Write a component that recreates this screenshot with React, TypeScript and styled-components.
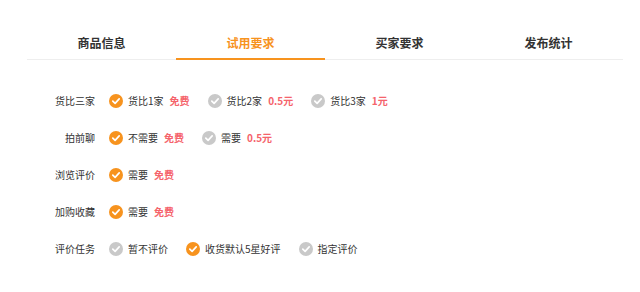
import React from "react";
import styled, { createGlobalStyle } from "styled-components";

const Global = createGlobalStyle`
  html, body { margin: 0; padding: 0; background: #fff; }
  body { font-family: "Noto Sans CJK SC", "Noto Sans", sans-serif; color: #333; }
`;

const Page = styled.div`
  width: 640px;
  height: 292px;
  padding: 27px 17px 0 27px;
  box-sizing: border-box;
`;

const Tabs = styled.div`
  display: grid;
  grid-template-columns: repeat(4, 1fr);
  width: 596px;
  border-bottom: 1px solid #eeeeee;
`;

const Tab = styled.div<{ $active?: boolean }>`
  position: relative;
  height: 32px;
  line-height: 32px;
  text-align: center;
  font-size: 12px;
  font-weight: 700;
  color: ${(p) => (p.$active ? "#f7931e" : "#333")};
  &::after {
    content: "";
    display: ${(p) => (p.$active ? "block" : "none")};
    position: absolute;
    left: 0;
    right: 0;
    bottom: -1px;
    height: 2px;
    background: #f7931e;
  }
`;

const Rows = styled.div`
  display: flex;
  flex-direction: column;
  padding-top: 22px;
`;

const Row = styled.div`
  display: flex;
  align-items: center;
  height: 37px;
`;

const Label = styled.div`
  width: 68px;
  text-align: right;
  font-size: 10px;
  color: #333;
  margin-right: 14px;
`;

const Options = styled.div`
  display: flex;
  align-items: center;
  gap: 18px;
`;

const Option = styled.div`
  display: flex;
  align-items: center;
  font-size: 10px;
  color: #333;
`;

const OptText = styled.span`
  margin-left: 5px;
`;

const Price = styled.span`
  margin-left: 6px;
  color: #f5636b;
  font-weight: 700;
`;

const Check = ({ on }: { on: boolean }) => (
  <svg width="14" height="14" viewBox="0 0 14 14">
    <circle cx="7" cy="7" r="7" fill={on ? "#f7931e" : "#c9c9c9"} />
    <path
      d="M3.8 7.1 L6.1 9.3 L10.2 4.9"
      fill="none"
      stroke="#fff"
      strokeWidth="1.7"
      strokeLinecap="round"
      strokeLinejoin="round"
    />
  </svg>
);

type Opt = { text: string; price?: string; on: boolean };

const data: { label: string; opts: Opt[] }[] = [
  {
    label: "货比三家",
    opts: [
      { text: "货比1家", price: "免费", on: true },
      { text: "货比2家", price: "0.5元", on: false },
      { text: "货比3家", price: "1元", on: false },
    ],
  },
  {
    label: "拍前聊",
    opts: [
      { text: "不需要", price: "免费", on: true },
      { text: "需要", price: "0.5元", on: false },
    ],
  },
  { label: "浏览评价", opts: [{ text: "需要", price: "免费", on: true }] },
  { label: "加购收藏", opts: [{ text: "需要", price: "免费", on: true }] },
  {
    label: "评价任务",
    opts: [
      { text: "暂不评价", on: false },
      { text: "收货默认5星好评", on: true },
      { text: "指定评价", on: false },
    ],
  },
];

export default function App() {
  return (
    <>
      <Global />
      <Page>
        <Tabs>
          <Tab>商品信息</Tab>
          <Tab $active>试用要求</Tab>
          <Tab>买家要求</Tab>
          <Tab>发布统计</Tab>
        </Tabs>
        <Rows>
          {data.map((r) => (
            <Row key={r.label}>
              <Label>{r.label}</Label>
              <Options>
                {r.opts.map((o) => (
                  <Option key={o.text}>
                    <Check on={o.on} />
                    <OptText>{o.text}</OptText>
                    {o.price && <Price>{o.price}</Price>}
                  </Option>
                ))}
              </Options>
            </Row>
          ))}
        </Rows>
      </Page>
    </>
  );
}
